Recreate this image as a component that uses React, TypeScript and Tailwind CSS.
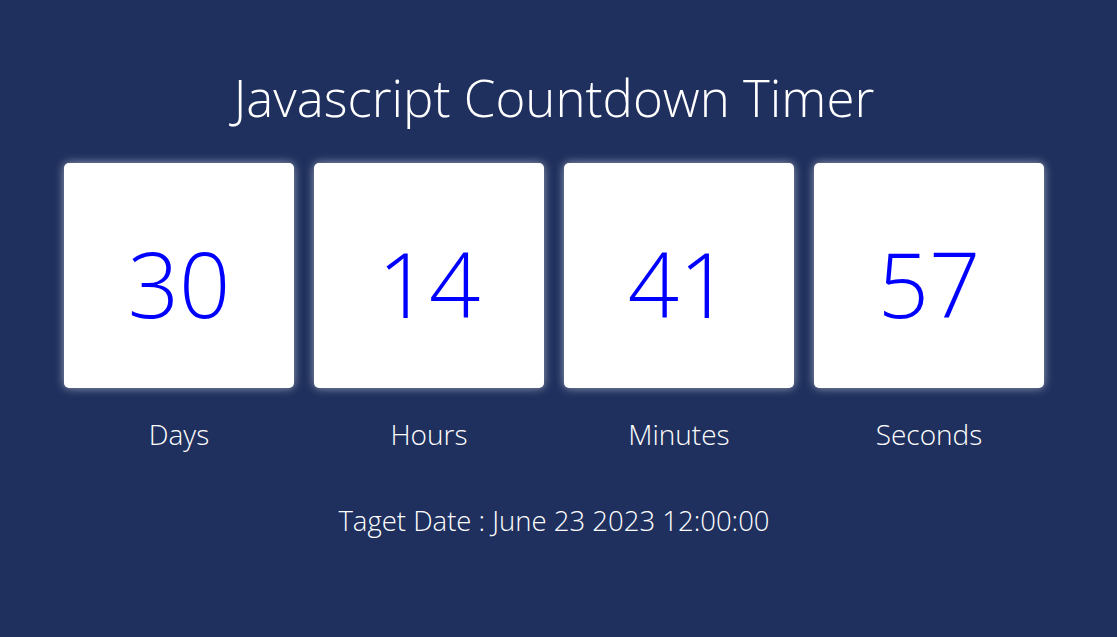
import React from 'react';

const units = [
  { value: '30', label: 'Days' },
  { value: '14', label: 'Hours' },
  { value: '41', label: 'Minutes' },
  { value: '57', label: 'Seconds' },
];

export default function App() {
  return (
    <div className="min-h-[637px] w-full bg-[#1f305e] text-white font-['Open_Sans',sans-serif] font-light">
      <div className="flex flex-col items-center pr-[9px] pt-[64px]">
        <h1 className="text-[51px] leading-[66px] font-light">Javascript Countdown Timer</h1>
        <div className="mt-[33px] flex gap-5">
          {units.map((u) => (
            <div key={u.label} className="flex w-[230px] flex-col items-center">
              <div className="flex h-[225px] w-[230px] items-center justify-center rounded-[5px] bg-white shadow-[0_0_10px_rgba(255,255,255,0.55)]">
                <span className="pt-[14px] text-[90px] leading-none text-[#0000ff]">{u.value}</span>
              </div>
              <div className="mt-[28px] text-[28px] leading-[36px]">{u.label}</div>
            </div>
          ))}
        </div>
        <p className="mt-[49px] text-[27.5px] leading-[40px]">Taget Date : June 23 2023 12:00:00</p>
      </div>
    </div>
  );
}
